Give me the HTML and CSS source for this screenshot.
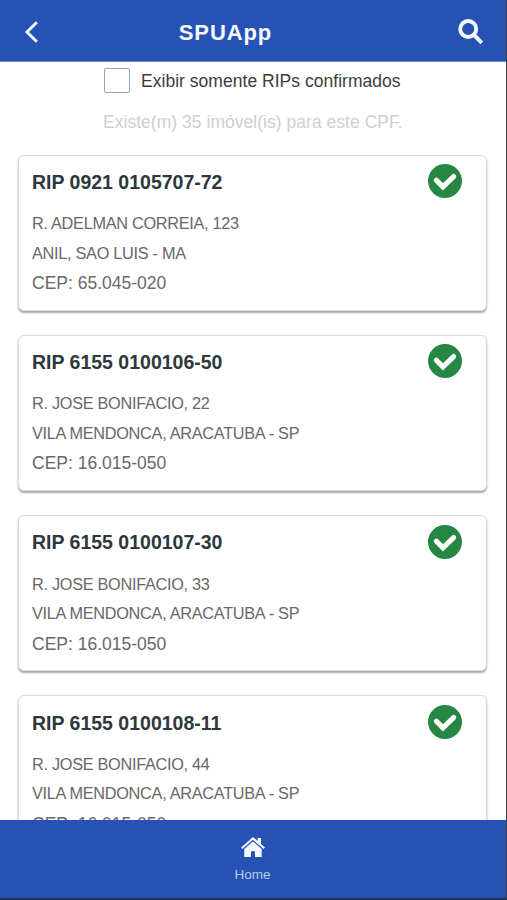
FILE: index.html
```html
<!DOCTYPE html>
<html lang="pt-BR">
<head>
<meta charset="utf-8">
<title>SPUApp</title>
<link rel="stylesheet" href="styles.css">
</head>
<body>
<div class="app">
  <header class="header">
    <svg class="back" viewBox="0 0 16 24"><path d="M13.8 2.3 4 12 13.8 21.7"/></svg>
    <h1>SPUApp</h1>
    <svg class="search" viewBox="0 0 26 26"><circle cx="10.2" cy="10" r="8"/><path d="m16 16 7.8 7.8"/></svg>
  </header>
  <main class="content">
    <label class="filter"><span class="checkbox"></span><span class="filter-text">Exibir somente RIPs confirmados</span></label>
    <p class="count">Existe(m) 35 imóvel(is) para este CPF.</p>
    <div class="list">
      <article class="card">
        <div class="details"><h2>RIP 0921 0105707-72</h2><p>R. ADELMAN CORREIA, 123</p><p>ANIL, SAO LUIS - MA</p><p class="cep">CEP: 65.045-020</p></div>
        <svg class="check" viewBox="0 0 34 34"><circle cx="17" cy="17" r="17"/><path d="m8.4 16.2 6.5 6.7L25.6 12.6"/></svg>
      </article>
      <article class="card">
        <div class="details"><h2>RIP 6155 0100106-50</h2><p>R. JOSE BONIFACIO, 22</p><p>VILA MENDONCA, ARACATUBA - SP</p><p class="cep">CEP: 16.015-050</p></div>
        <svg class="check" viewBox="0 0 34 34"><circle cx="17" cy="17" r="17"/><path d="m8.4 16.2 6.5 6.7L25.6 12.6"/></svg>
      </article>
      <article class="card">
        <div class="details"><h2>RIP 6155 0100107-30</h2><p>R. JOSE BONIFACIO, 33</p><p>VILA MENDONCA, ARACATUBA - SP</p><p class="cep">CEP: 16.015-050</p></div>
        <svg class="check" viewBox="0 0 34 34"><circle cx="17" cy="17" r="17"/><path d="m8.4 16.2 6.5 6.7L25.6 12.6"/></svg>
      </article>
      <article class="card">
        <div class="details"><h2>RIP 6155 0100108-11</h2><p>R. JOSE BONIFACIO, 44</p><p>VILA MENDONCA, ARACATUBA - SP</p><p class="cep">CEP: 16.015-050</p></div>
        <svg class="check" viewBox="0 0 34 34"><circle cx="17" cy="17" r="17"/><path d="m8.4 16.2 6.5 6.7L25.6 12.6"/></svg>
      </article>
    </div>
  </main>
  <footer class="tabbar">
    <svg class="home" viewBox="0 0 24 20"><path d="M0 10.5 12 0l4.6 4V1H20v6l4 3.5-1.4 1.6L12 2.8 1.4 12.1z"/><path d="m12 4.4 8.7 7.5V20H14v-5.8h-4V20H3.3v-8.1z"/></svg>
    <span>Home</span>
  </footer>
</div>
</body>
</html>
```
FILE: styles.css
```css
* { box-sizing: border-box; }
body { margin: 0; font-family: "Liberation Sans", Arial, sans-serif; background: #fff; }
h1, h2, p { margin: 0; }
svg { display: block; flex: none; }
.app { height: 900px; display: flex; flex-direction: column; overflow: hidden; border-right: 1px solid #3b3e46; border-bottom: 2px solid #25324a; }
.header { flex: none; height: 62px; display: grid; grid-template-columns: 40px 1fr 40px; align-items: center; padding: 3px 20px 0 22px; background: #2752b5; border-bottom: 1px solid #6f8dce; color: #f4f9ff; }
.header h1 { font-size: 22px; line-height: 26px; letter-spacing: 0.9px; text-align: center; padding: 2px 57px 0 0; }
.back { width: 16px; height: 24px; margin-left: 1px; fill: none; stroke: #f4f9ff; stroke-width: 2.9; }
.search { width: 26px; height: 26px; justify-self: end; margin-right: 2px; fill: none; stroke: #f4f9ff; stroke-width: 3.9; }
.content { flex: 1; min-height: 0; overflow: hidden; padding: 6px 19px 0 18px; }
.filter { display: flex; align-items: center; margin-left: 86px; height: 25px; gap: 11px; }
.checkbox { width: 26px; height: 25px; border: 1.5px solid #94a7b0; border-radius: 2px; }
.filter-text { font-size: 17.5px; letter-spacing: 0.03px; color: #3c3c3c; white-space: nowrap; padding-top: 2px; }
.count { margin-top: 17px; padding-left: 85px; font-size: 17.5px; letter-spacing: 0.03px; line-height: 24px; color: #cfcfcf; white-space: nowrap; }
.list { display: flex; flex-direction: column; gap: 24.3px; margin-top: 20.5px; }
.card { height: 156px; flex: none; display: flex; justify-content: space-between; align-items: flex-start; padding: 8.6px 24px 0 13px; border: 1px solid #d9d9d9; border-radius: 6px; background: #fff; box-shadow: 0 2px 2px rgba(0,0,0,.34); }
.details h2 { margin: 4.6px 0 14.4px; font-size: 19.5px; line-height: 26px; color: #2d383c; white-space: nowrap; }
.details p { font-size: 16.3px; line-height: 29.5px; letter-spacing: -0.29px; color: #686868; white-space: nowrap; }
.details .cep { font-size: 17.5px; line-height: 31px; letter-spacing: 0; }
.check { width: 34px; height: 34px; }
.check circle { fill: #268744; }
.check path { fill: none; stroke: #fff; stroke-width: 5.2; stroke-linecap: round; }
.tabbar { flex: none; height: 78px; display: flex; flex-direction: column; align-items: center; padding: 17px 1px 0 0; background: #2752b5; color: #b4ccef; }
.home { width: 24px; height: 20px; fill: #f4faff; }
.tabbar span { margin-top: 9px; font-size: 13.5px; line-height: 18px; }
```
